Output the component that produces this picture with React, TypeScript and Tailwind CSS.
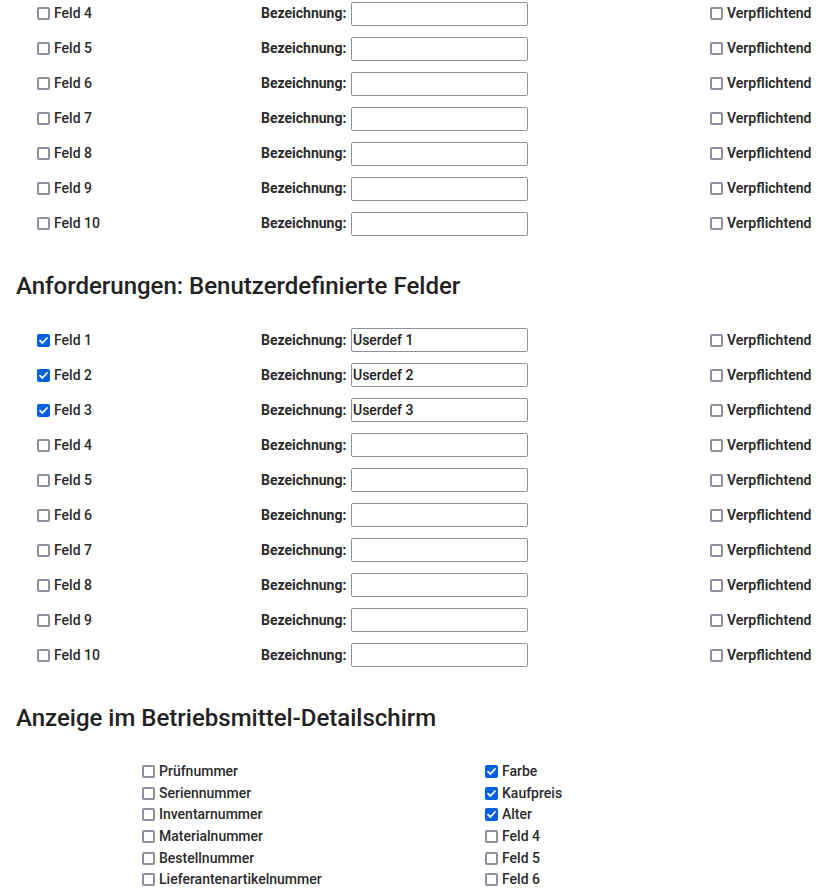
import React from "react";

const font = { fontFamily: "Roboto, 'Liberation Sans', sans-serif" };

function Box({ checked }: { checked?: boolean }) {
  if (checked) {
    return (
      <span className="inline-flex w-[13px] h-[13px] rounded-[2px] bg-[#0060df] items-center justify-center shrink-0">
        <svg width="11" height="11" viewBox="0 0 11 11" fill="none">
          <path d="M2 5.6 L4.4 8 L9 3" stroke="white" strokeWidth="1.8" strokeLinecap="round" strokeLinejoin="round" />
        </svg>
      </span>
    );
  }
  return <span className="inline-block w-[13px] h-[13px] rounded-[2px] border-2 border-[#8f8f9d] bg-white shrink-0" />;
}

function Row({ n, checked, value }: { n: number; checked?: boolean; value?: string }) {
  return (
    <div className="flex items-center h-[35px] pl-[37px]">
      <div className="flex items-center w-[224px] gap-[4px]">
        <Box checked={checked} />
        <span className="text-[14px] font-medium text-[#2b2b2b]">Feld {n}</span>
      </div>
      <div className="w-[90px] text-[14px] font-bold text-[#2b2b2b]">Bezeichnung:</div>
      <div className="w-[177px] h-[24px] border border-[#8f8f9d] rounded-[2px] bg-white flex items-center px-[1px] text-[14px] font-medium text-[#222]">
        {value}
      </div>
      <div className="flex items-center gap-[4px] ml-[182px]">
        <Box />
        <span className="text-[14px] font-semibold text-[#2b2b2b]">Verpflichtend</span>
      </div>
    </div>
  );
}

function Item({ label, checked }: { label: string; checked?: boolean }) {
  return (
    <div className="flex items-center h-[21.6px] gap-[4px]">
      <Box checked={checked} />
      <span className="text-[14px] font-medium text-[#2b2b2b]">{label}</span>
    </div>
  );
}

export default function App() {
  const left = ["Prüfnummer", "Seriennummer", "Inventarnummer", "Materialnummer", "Bestellnummer", "Lieferantenartikelnummer"];
  const right: [string, boolean][] = [["Farbe", true], ["Kaufpreis", true], ["Alter", true], ["Feld 4", false], ["Feld 5", false], ["Feld 6", false]];
  return (
    <div className="w-[826px] h-[893px] overflow-hidden bg-white" style={font}>
      <div className="mt-[-4px]">
        {[4, 5, 6, 7, 8, 9, 10].map((n) => (
          <Row key={n} n={n} />
        ))}
      </div>
      <h2 className="mt-[30px] mb-[21.5px] pl-[16px] h-[30px] leading-[30px] text-[24px] font-medium text-[#222]">
        Anforderungen: Benutzerdefinierte Felder
      </h2>
      <div>
        {[1, 2, 3, 4, 5, 6, 7, 8, 9, 10].map((n) => (
          <Row key={n} n={n} checked={n <= 3} value={n <= 3 ? `Userdef ${n}` : undefined} />
        ))}
      </div>
      <h2 className="mt-[30.5px] pl-[16px] h-[30px] leading-[30px] text-[24px] font-medium text-[#222]">
        Anzeige im Betriebsmittel-Detailschirm
      </h2>
      <div className="flex mt-[28px]">
        <div className="pl-[142px] w-[485px]">
          {left.map((l) => (
            <Item key={l} label={l} />
          ))}
        </div>
        <div>
          {right.map(([l, c]) => (
            <Item key={l} label={l} checked={c} />
          ))}
        </div>
      </div>
    </div>
  );
}
